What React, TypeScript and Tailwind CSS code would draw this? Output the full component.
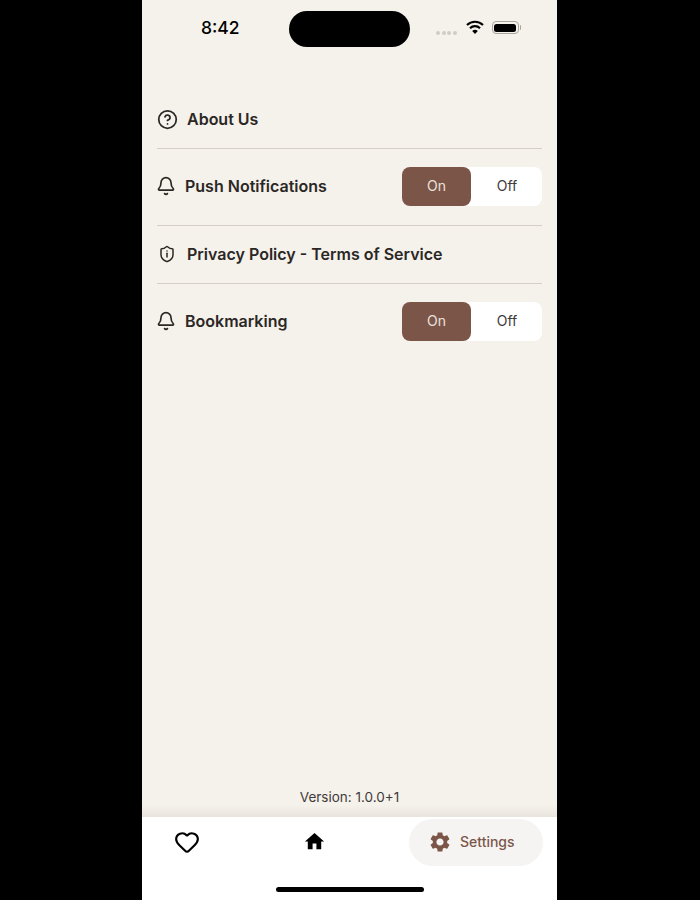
import { Bell, CircleHelp, Heart } from "lucide-react";
import { MdHome, MdSettings } from "react-icons/md";

function Toggle() {
  return (
    <div className="flex h-[39px] w-[140px] rounded-[8px] bg-white text-[14px] leading-[38px] text-center">
      <div className="w-[69px] rounded-[8px] bg-[#7b5648] text-[#e9e2de]">On</div>
      <div className="w-[71px] pl-[1px] text-[#3d3a38]">Off</div>
    </div>
  );
}

function Divider() {
  return <div className="h-[1px] bg-[#d5cfc8]" />;
}

function Label({ children }: { children: string }) {
  return <span className="text-[16px] font-semibold text-[#2b2725]">{children}</span>;
}

export default function App() {
  return (
    <div className="flex h-[900px] w-[700px] overflow-hidden bg-black" style={{ fontFamily: "Inter, sans-serif" }}>
      <div className="ml-[142px] flex h-[900px] w-[415px] flex-col bg-[#f5f1eb]">
        <div className="flex h-[95px] items-start">
          <div className="mt-[17px] ml-[59px] w-[88px] text-[17.5px] leading-[22px] font-medium text-black">8:42</div>
          <div className="mt-[11px] h-[36px] w-[121px] rounded-full bg-black" />
          <div className="mt-[20px] ml-[26px] flex items-start">
            <div className="mt-[11px] mr-[9px] flex gap-[1.5px]">
              <i className="h-[4px] w-[4px] rounded-full bg-[#cfccc8]" />
              <i className="h-[4px] w-[4px] rounded-full bg-[#cfccc8]" />
              <i className="h-[4px] w-[4px] rounded-full bg-[#cfccc8]" />
              <i className="h-[4px] w-[4px] rounded-full bg-[#cfccc8]" />
            </div>
            <svg width="18" height="14" viewBox="0 0 18 14" fill="none" stroke="black" strokeWidth="2.2">
              <path d="M1 5a11.5 11.5 0 0 1 16 0" />
              <path d="M4 8.2a7.2 7.2 0 0 1 10 0" />
              <path d="M9 14 6.2 11a4 4 0 0 1 5.6 0Z" fill="black" stroke="none" />
            </svg>
            <div className="ml-[8px] mt-[1px] flex items-center">
              <div className="h-[13px] w-[27px] rounded-[4px] border border-[#a8a5a1] p-[1.5px]">
                <div className="h-full w-full rounded-[2.5px] bg-black" />
              </div>
              <div className="ml-[1px] h-[5px] w-[1.5px] rounded-r bg-[#a8a5a1]" />
            </div>
          </div>
        </div>

        <div className="flex flex-1 flex-col px-[15px]">
          <div className="flex h-[53px] items-center gap-[9px] pb-[5px]">
            <CircleHelp size={21} strokeWidth={2} color="#2b2725" />
            <Label>About Us</Label>
          </div>
          <Divider />
          <div className="flex h-[76px] items-center justify-between pb-[1px]">
            <div className="-ml-[1px] flex items-center gap-[9px] pb-[1px]">
              <Bell size={20} strokeWidth={2} color="#2b2725" />
              <Label>Push Notifications</Label>
            </div>
            <Toggle />
          </div>
          <Divider />
          <div className="flex h-[57px] items-center gap-[11px] pb-[2px] pl-[1px]">
            <svg width="18" height="18" viewBox="0 0 24 24" fill="none" stroke="#2b2725" strokeWidth="2" strokeLinecap="round" strokeLinejoin="round">
              <path d="M20 13c0 5-3.5 7.5-7.66 8.95a1 1 0 0 1-.67-.01C7.5 20.5 4 18 4 13V6a1 1 0 0 1 1-1c2 0 4.5-1.2 6.24-2.72a1.17 1.17 0 0 1 1.52 0C14.51 3.81 17 5 19 5a1 1 0 0 1 1 1z" />
              <path d="M12 11v5" />
              <path d="M12 8h.01" />
            </svg>
            <Label>Privacy Policy - Terms of Service</Label>
          </div>
          <Divider />
          <div className="flex h-[76px] items-center justify-between pb-[1px]">
            <div className="-ml-[1px] flex items-center gap-[9px] pb-[1px]">
              <Bell size={20} strokeWidth={2} color="#2b2725" />
              <Label>Bookmarking</Label>
            </div>
            <Toggle />
          </div>
          <div className="mt-auto pb-[11px] text-center text-[13.5px] leading-[17px] text-[#3f3b39]">Version: 1.0.0+1</div>
        </div>

        <div className="h-[12px] -mt-[12px] bg-gradient-to-b from-transparent to-[#e9e5de]" />

        <div className="h-[83px] bg-white pt-[2px]">
          <div className="flex h-[47px] items-center">
            <div className="flex w-[90px] justify-center pb-[2px]">
              <Heart size={26} strokeWidth={2} color="black" />
            </div>
            <div className="flex w-[164px] justify-center pb-[2px]">
              <MdHome size={23} color="black" />
            </div>
            <div className="ml-[13px] flex h-[47px] w-[134px] items-center gap-[8px] rounded-full bg-[#f5f4f2] pb-[2px] pl-[19px]">
              <MdSettings size={24} color="#7b5648" />
              <span className="text-[14px] font-medium text-[#7b5648]">Settings</span>
            </div>
          </div>
          <div className="mx-auto mt-[21px] h-[5px] w-[148px] rounded-full bg-black" />
        </div>
      </div>
    </div>
  );
}
